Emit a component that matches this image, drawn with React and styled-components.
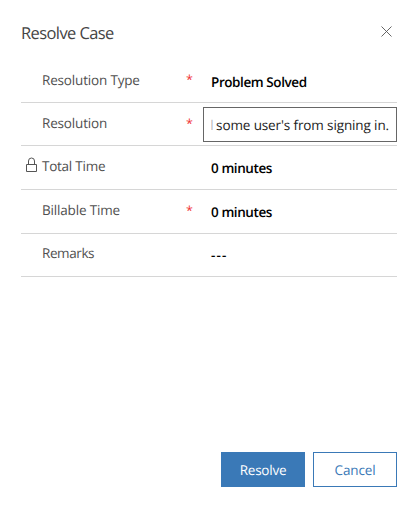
import React from 'react'
import styled, {createGlobalStyle} from 'styled-components'

const GlobalStyle = createGlobalStyle`
    * {
        box-sizing: border-box;
    }

    body {
        margin: 0;
        background-color: white;
        font-family: "Open Sans", "Noto Sans", sans-serif;
        text-rendering: geometricPrecision;
        overflow: hidden;
    }
`

const Dialog = styled.div`
    height: 100vh;
    padding: 20px 16px 19px 21px;
    display: flex;
    flex-direction: column;
`

const Header = styled.div`
    height: 39px;
    display: flex;
    justify-content: space-between;
`

const Title = styled.h1`
    margin: 0;
    font-size: 16.5px;
    font-weight: 400;
    line-height: 26px;
    letter-spacing: -0.6px;
    color: #444;
`

const Close = styled.button`
    width: 21px;
    height: 22px;
    padding: 0;
    border: none;
    background: none;
    display: flex;
    align-items: center;
    justify-content: center;
    cursor: pointer;
`

const Fields = styled.div`
    flex: 1;
`

const Row = styled.div`
    height: ${props => props.$height}px;
    border-bottom: 1px solid #d6d6d6;
    display: flex;
`

const IconSlot = styled.div`
    width: 21px;
    padding: 10px 0 0 5px;
`

const Label = styled.label`
    width: 144px;
    padding-top: ${props => props.$top}px;
    font-size: 13.5px;
    line-height: 20px;
    letter-spacing: ${props => props.$spacing || -0.17}px;
    color: #505050;
`

const Required = styled.span`
    width: 17px;
    padding-top: ${props => props.$top}px;
    font-size: 12.5px;
    line-height: 20px;
    color: #f03030;
`

const Value = styled.div`
    flex: 1;
    padding: ${props => props.$top}px 0 0 8px;
    font-size: 13.5px;
    font-weight: 600;
    line-height: 20px;
    letter-spacing: ${props => props.$empty ? 1.1 : -0.42}px;
    color: black;
`

const InputBox = styled.div`
    width: 194px;
    height: 35px;
    margin-top: 4px;
    padding: 0 7px;
    border: 1px solid #666;
`

// keeps the end of a long value in view
const InputText = styled.div`
    height: 33px;
    display: flex;
    justify-content: flex-end;
    overflow: hidden;
    white-space: pre;
    font-size: 13.5px;
    line-height: 35px;
    letter-spacing: -0.12px;
    color: #222;
`

const Overflowed = styled.span`
    letter-spacing: -0.5px;
    color: #bbb;
`

const Footer = styled.div`
    display: flex;
    justify-content: flex-end;
    gap: 8px;
`

const Button = styled.button`
    width: 84px;
    height: 35px;
    padding: 0;
    border: 1px solid #3a79b7;
    background-color: ${props => props.$primary ? "#3a79b7" : "white"};
    color: ${props => props.$primary ? "white" : "#3a79b7"};
    font-family: inherit;
    font-size: 13.5px;
    line-height: 35px;
    letter-spacing: ${props => props.$primary ? -0.25 : -0.15}px;
    text-rendering: inherit;
    cursor: pointer;
`

const LockIcon = () => (
    <svg width="11" height="16" viewBox="0 0 11 16" fill="none" stroke="#555">
        <path d="M0.5 7.5h10v7h-10z M2.5 7.5V4a3 3 0 0 1 6 0v3.5" />
    </svg>
)

const App = () => {
    return (
        <>
            <GlobalStyle />
            <Dialog>
                <Header>
                    <Title>Resolve Case</Title>
                    <Close aria-label="Close">
                        <svg width="11" height="11" viewBox="0 0 11 11" stroke="#555" strokeWidth="0.9">
                            <path d="M0.5 0.5l10 10M10.5 0.5l-10 10" />
                        </svg>
                    </Close>
                </Header>
                <Fields>
                    <Row $height={44}>
                        <IconSlot />
                        <Label $top={11}>Resolution Type</Label>
                        <Required $top={11}>*</Required>
                        <Value $top={13}>Problem Solved</Value>
                    </Row>
                    <Row $height={43}>
                        <IconSlot />
                        <Label $top={10}>Resolution</Label>
                        <Required $top={11}>*</Required>
                        <InputBox>
                            <InputText>
                                <Overflowed>{"l "}</Overflowed>
                                <span>some user's from signing in.</span>
                            </InputText>
                        </InputBox>
                    </Row>
                    <Row $height={44}>
                        <IconSlot><LockIcon /></IconSlot>
                        <Label $top={10} $spacing={-0.25}>Total Time</Label>
                        <Required />
                        <Value $top={12}>0 minutes</Value>
                    </Row>
                    <Row $height={44}>
                        <IconSlot />
                        <Label $top={10}>Billable Time</Label>
                        <Required $top={11}>*</Required>
                        <Value $top={12}>0 minutes</Value>
                    </Row>
                    <Row $height={43}>
                        <IconSlot />
                        <Label $top={9} $spacing={-0.4}>Remarks</Label>
                        <Required />
                        <Value $top={11} $empty>---</Value>
                    </Row>
                </Fields>
                <Footer>
                    <Button $primary>Resolve</Button>
                    <Button>Cancel</Button>
                </Footer>
            </Dialog>
        </>
    )
}

export default App
